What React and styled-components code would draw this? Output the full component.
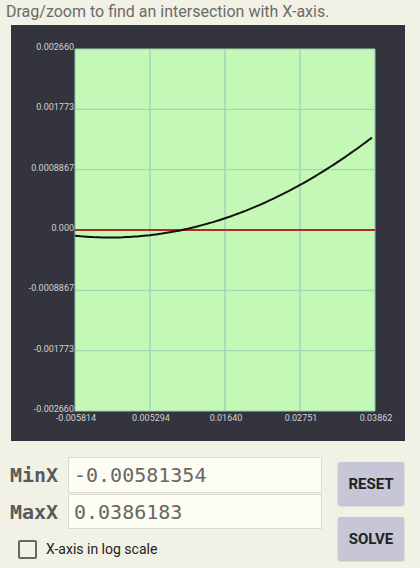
import React from 'react'
import styled, { createGlobalStyle } from 'styled-components'

const Global = createGlobalStyle`
    body {
        margin: 0;
        background: #f1f1e6;
        font-family: Roboto, 'Liberation Sans', sans-serif;
    }
`

const Page = styled.div`
    width: 420px;
    height: 568px;
    overflow: hidden;
`

const Hint = styled.div`
    padding: 2px 6px 3px;
    font-size: 16px;
    line-height: 20px;
    color: #6b6b6b;
`

const Panel = styled.div`
    margin: 0 15px 0 11px;
    height: 416px;
    background: #34343f;
`

const Form = styled.div`
    display: flex;
    padding: 16px 0 0 10px;
`

const Fields = styled.div`
    display: grid;
    grid-template-columns: 58px 254px;
    grid-template-rows: 36px 35px auto;
    row-gap: 1px;
`

const FieldLabel = styled.div`
    font-family: 'DejaVu Sans Mono', 'Liberation Mono', monospace;
    font-weight: bold;
    font-size: 20px;
    color: #5a5a5a;
    display: flex;
    align-items: center;
`

const Input = styled.div`
    box-sizing: border-box;
    border: 1px solid #dcdcd4;
    background: #fdfdf3;
    padding-left: 5px;
    font-family: 'DejaVu Sans Mono', 'Liberation Mono', monospace;
    font-size: 20px;
    color: #676767;
    display: flex;
    align-items: center;
`

const CheckRow = styled.label`
    grid-column: 1 / 3;
    display: flex;
    align-items: center;
    gap: 9px;
    padding: 8px 0 0 8px;
    font-size: 14px;
    color: #222;
`

const Box = styled.span`
    box-sizing: border-box;
    width: 19px;
    height: 19px;
    border: 2px solid #666;
    border-radius: 2px;
`

const Buttons = styled.div`
    display: flex;
    flex-direction: column;
    gap: 12px;
    margin-left: 16px;
    padding-top: 5px;
`

const Button = styled.div`
    width: 66px;
    height: 43px;
    background: #c6c6d6;
    border-radius: 2px;
    box-shadow: 0 1px 2px rgba(0, 0, 0, 0.25);
    display: flex;
    align-items: center;
    justify-content: center;
    font-weight: bold;
    font-size: 15px;
    color: #222;
`

// plot box inside the panel
const PX = 64, PY = 24, PW = 300, PH = 362
const yLabels = ['0.002660', '0.001773', '0.0008867', '0.000', '-0.0008867', '-0.001773', '-0.002660']
const xLabels = ['-0.005814', '0.005294', '0.01640', '0.02751', '0.03862']

const curvePath = () => {
    let d = ''
    for (let x = 75; x <= 374; x += 3) {
        const y = 237.5 - 0.001456 * (x - 110) * (x - 110)
        d += (d ? 'L' : 'M') + (x - 11) + ',' + (y - 25).toFixed(1)
    }
    return d
}

const Chart = () => (
    <svg width="394" height="416">
        <rect x={PX} y={PY} width={PW} height={PH} fill="#c4f8b6" />
        {xLabels.map((_, i) => (
            <line key={'v' + i} x1={PX + i * 75} x2={PX + i * 75} y1={PY} y2={PY + PH} stroke="#8ec4bc" strokeWidth="1" />
        ))}
        {yLabels.map((_, i) => (
            <line key={'h' + i} x1={PX} x2={PX + PW} y1={PY + i * PH / 6} y2={PY + i * PH / 6} stroke="#9cd0b0" strokeWidth="1" />
        ))}
        <line x1={PX} x2={PX + PW} y1={205} y2={205} stroke="#b42a1c" strokeWidth="2.2" />
        <path d={curvePath()} fill="none" stroke="#111" strokeWidth="2" />
        {yLabels.map((t, i) => (
            <text key={t} x={PX - 1} y={PY + i * PH / 6 + 1} textAnchor="end" fontSize="9" fill="#d2d2d2" fontFamily="Roboto, sans-serif">{t}</text>
        ))}
        {xLabels.map((t, i) => (
            <text key={t} x={PX + i * 75 + 1} y={396} textAnchor="middle" fontSize="9" fill="#d2d2d2" fontFamily="Roboto, sans-serif">{t}</text>
        ))}
    </svg>
)

const App = () => {
    return <Page>
        <Global />
        <Hint>Drag/zoom to find an intersection with X-axis.</Hint>
        <Panel>
            <Chart />
        </Panel>
        <Form>
            <Fields>
                <FieldLabel>MinX</FieldLabel>
                <Input>-0.00581354</Input>
                <FieldLabel>MaxX</FieldLabel>
                <Input>0.0386183</Input>
                <CheckRow><Box />X-axis in log scale</CheckRow>
            </Fields>
            <Buttons>
                <Button>RESET</Button>
                <Button>SOLVE</Button>
            </Buttons>
        </Form>
    </Page>
}

export default App
